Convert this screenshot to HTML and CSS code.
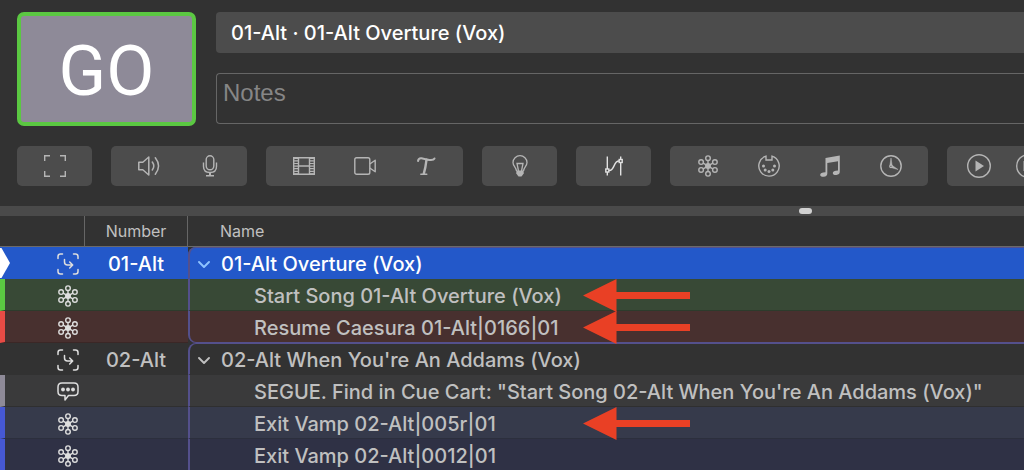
FILE: index.html
```html
<!DOCTYPE html>
<html lang="en">
<head>
<meta charset="UTF-8">
<meta name="viewport" content="width=device-width, initial-scale=1.0">
<title>Cue List</title>
<link rel="stylesheet" href="styles.css">
</head>
<body>

<svg class="symbols" aria-hidden="true">
  <symbol id="network" viewBox="0 0 22 22">
    <g fill="none" stroke="currentColor" stroke-width="1.4">
      <path d="M11 5.8v10.4M6.2 8.2l9.600 5.600M15.800 8.200l-9.600 5.600"/>
      <circle cx="11" cy="3.200" r="2.300"/>
      <circle cx="11" cy="18.800" r="2.300"/>
      <circle cx="4.100" cy="7.100" r="2.300"/>
      <circle cx="17.900" cy="7.100" r="2.300"/>
      <circle cx="4.100" cy="14.900" r="2.300"/>
      <circle cx="17.900" cy="14.900" r="2.300"/>
    </g>
    <circle cx="11" cy="11" r="3" fill="currentColor"/>
  </symbol>
  <symbol id="group" viewBox="0 0 22 22">
    <g fill="none" stroke="currentColor" stroke-width="1.5" stroke-linecap="round" stroke-linejoin="round">
      <path d="M1 5.5V3.5Q1 1 3.5 1h2M16.500 1h2Q21 1 21 3.500v2M21 16.500v2Q21 21 18.500 21h-2M5.500 21h-2Q1 21 1 18.500v-2"/>
      <path d="M7.500 6.500v2.500q0 3 3 3h5M12.700 9l3 3-3 3"/>
    </g>
  </symbol>
  <symbol id="memo" viewBox="0 0 22 22">
    <path d="M5 2h12q4 0 4 4v4.500q0 4-4 4h-5.500L8 19v-4.500H5q-4 0-4-4V6q0-4 4-4z" fill="none" stroke="currentColor" stroke-width="1.500" stroke-linejoin="round"/>
    <g fill="currentColor">
      <circle cx="6" cy="8.500" r="1.900"/>
      <circle cx="11" cy="8.500" r="1.900"/>
      <circle cx="16" cy="8.500" r="1.900"/>
    </g>
  </symbol>
  <symbol id="chevron" viewBox="0 0 12 12">
    <path d="M1 3l5 5 5-5" fill="none" stroke="currentColor" stroke-width="1.900" stroke-linecap="round" stroke-linejoin="round"/>
  </symbol>
  <symbol id="arrow" viewBox="0 0 107 33">
    <path d="M0 16.500L33.500 0v13H107v7H33.500v13z" fill="currentColor"/>
  </symbol>
</svg>

<header class="top">
  <button class="go" type="button">GO</button>
  <div class="fields">
    <input class="cue-title" type="text" aria-label="Cue" value="01-Alt · 01-Alt Overture (Vox)">
    <textarea class="notes" aria-label="Notes" placeholder="Notes"></textarea>
  </div>
</header>

<div class="toolbar">
  <div class="tools">
    <button type="button" aria-label="Group">
      <svg viewBox="0 0 22 22"><path d="M.7 6V.7H6M16 .7h5.300V6M21.300 16v5.300H16M6 21.300H.7V16" fill="none" stroke="currentColor" stroke-width="1.400"/></svg>
    </button>
  </div>
  <div class="tools">
    <button type="button" aria-label="Audio">
      <svg viewBox="0 0 22 22"><g fill="none" stroke="currentColor" stroke-width="1.500" stroke-linejoin="round"><path d="M.8 7.300h4L10.800 2v18l-6-5.300H.8z"/><path d="M14.300 7q3 4 0 8M17.300 2.800q6.500 8.200 0 16.400" stroke-linecap="round"/></g></svg>
    </button>
    <button type="button" aria-label="Mic">
      <svg viewBox="0 0 22 22"><g fill="none" stroke="currentColor" stroke-width="1.400"><rect x="7.200" y=".8" width="7.600" height="14" rx="3.800"/><path d="M4.500 7.500v4q0 6 6.500 6t6.500-6v-4"/></g><path d="M10 17.500h2v2.500h3v1.500H7V20h3z" fill="currentColor"/></svg>
    </button>
  </div>
  <div class="tools">
    <button type="button" aria-label="Video">
      <svg viewBox="0 0 22 22"><g fill="none" stroke="currentColor"><path d="M.7 2.700h20.600v16.600H.7zM5.500 2.700v16.600M16.500 2.700v16.600M5.500 11h11" stroke-width="1.400"/><path d="M3.100 2.700v16.600M18.900 2.700v16.600" stroke-width="4" stroke-dasharray="1.200 1.400"/></g></svg>
    </button>
    <button type="button" aria-label="Camera">
      <svg viewBox="0 0 22 22"><g fill="none" stroke="currentColor" stroke-width="1.400" stroke-linejoin="round"><rect x=".8" y="2.800" width="15" height="16.400" rx="1.800"/><path d="M15.800 9l5.400-3.800v11.600L15.800 13"/></g></svg>
    </button>
    <button type="button" aria-label="Text">
      <svg viewBox="0 0 22 22"><g fill="none" stroke="currentColor" stroke-linecap="round"><path d="M3 6Q3.500 2.800 6.500 3.200Q13 5 16 5Q18.800 5 19.500 3.500" stroke-width="2"/><path d="M11.500 4.800Q10.500 13 8.800 18.700" stroke-width="2.400"/><path d="M5.800 19.300h6" stroke-width="1.400"/></g></svg>
    </button>
  </div>
  <div class="tools">
    <button type="button" aria-label="Light">
      <svg viewBox="0 0 22 22"><g fill="none" stroke="currentColor" stroke-width="1.300"><path d="M7.500 16C7 12 4 11 4 7.500a7 6.800 0 0 1 14 0C18 11 15 12 14.500 16"/><path d="M9.500 16L8 8.500h6L12.500 16"/></g><path d="M7.300 15.500h7.400v3L12.500 21.500h-3L7.300 18.500z" fill="currentColor"/></svg>
    </button>
  </div>
  <div class="tools">
    <button class="active" type="button" aria-label="Fade">
      <svg viewBox="0 0 22 22"><g fill="none" stroke="currentColor" stroke-width="1.400"><path d="M4.300 1.500v12.500M4.300 17v3.500M17.700 1.500v2.700M17.700 7.500v13M6 15.500c6 .5 4-9.500 10-9.500"/><rect x="2.800" y="14" width="3" height="3"/><rect x="16.200" y="4.500" width="3" height="3"/></g></svg>
    </button>
  </div>
  <div class="tools">
    <button type="button" aria-label="Network">
      <svg><use href="#network"/></svg>
    </button>
    <button type="button" aria-label="MIDI">
      <svg viewBox="0 0 22 22"><path d="M8 1.200V5h6V1.200A10.200 10.200 0 1 1 8 1.200z" fill="none" stroke="currentColor" stroke-width="1.400"/><g fill="currentColor"><circle cx="5.500" cy="11" r="1.500"/><circle cx="16.500" cy="11" r="1.500"/><circle cx="7.200" cy="14.900" r="1.500"/><circle cx="14.800" cy="14.900" r="1.500"/><circle cx="11" cy="16.600" r="1.500"/></g></svg>
    </button>
    <button type="button" aria-label="MIDI File">
      <svg viewBox="0 0 22 22"><path d="M6.500 3L20.800.4v16.200q0 3.200-3.400 3.400-3.600.2-3.600-2 0-2.200 5.200-2.500V6.200L8.300 8v10.500q0 3-3.600 3.200Q1.200 21.800 1.200 19.700 1.200 17.500 6.500 17.200z" fill="currentColor"/></svg>
    </button>
    <button type="button" aria-label="Timecode">
      <svg viewBox="0 0 22 22"><g fill="none" stroke="currentColor"><circle cx="11" cy="11" r="10.200" stroke-width="1.400"/><circle cx="11" cy="11.300" r="1.300" stroke-width="1.200"/></g><path d="M11 3l1.100 7.200h-2.200zM12.300 10.500l5.700 4-6.300-1.700z" fill="currentColor" stroke="currentColor" stroke-width=".5"/></svg>
    </button>
  </div>
  <div class="tools transport">
    <button type="button" aria-label="Start">
      <svg viewBox="0 0 24 24"><circle cx="12" cy="12" r="11.300" fill="none" stroke="currentColor" stroke-width="1.400"/><path d="M8.500 6.500L17 12l-8.500 5.500z" fill="currentColor"/></svg>
    </button>
    <button type="button" aria-label="Pause">
      <svg viewBox="0 0 24 24"><circle cx="12" cy="12" r="11.300" fill="none" stroke="currentColor" stroke-width="1.400"/><path d="M7.500 7h3v10h-3zM13.500 7h3v10h-3z" fill="currentColor"/></svg>
    </button>
  </div>
</div>

<div class="splitter"><div class="handle"></div></div>

<table class="cues">
  <colgroup>
    <col class="col-status">
    <col class="col-number">
    <col>
  </colgroup>
  <thead>
    <tr>
      <th></th>
      <th class="number">Number</th>
      <th class="name">Name</th>
    </tr>
  </thead>
  <tbody>
    <tr class="group selected">
      <td class="status"><svg class="playhead" viewBox="0 0 10 32"><path d="M0 1h1.500L10 16 1.500 31H0z" fill="currentColor"/></svg><svg class="icon"><use href="#group"/></svg></td>
      <td class="number">01-Alt</td>
      <td class="name"><svg class="chevron"><use href="#chevron"/></svg>01-Alt Overture (Vox)</td>
    </tr>
    <tr class="green">
      <td class="status"><svg class="icon"><use href="#network"/></svg></td>
      <td class="number"></td>
      <td class="name">Start Song 01-Alt Overture (Vox)<svg class="arrow"><use href="#arrow"/></svg></td>
    </tr>
    <tr class="red">
      <td class="status"><svg class="icon"><use href="#network"/></svg></td>
      <td class="number"></td>
      <td class="name">Resume Caesura 01-Alt|0166|01<svg class="arrow"><use href="#arrow"/></svg></td>
    </tr>
  </tbody>
  <tbody class="open">
    <tr class="group">
      <td class="status"><svg class="icon"><use href="#group"/></svg></td>
      <td class="number">02-Alt</td>
      <td class="name"><svg class="chevron"><use href="#chevron"/></svg>02-Alt When You're An Addams (Vox)</td>
    </tr>
    <tr class="gray">
      <td class="status"><svg class="icon"><use href="#memo"/></svg></td>
      <td class="number"></td>
      <td class="name">SEGUE. Find in Cue Cart: "Start Song 02-Alt When You're An Addams (Vox)"</td>
    </tr>
    <tr class="blue">
      <td class="status"><svg class="icon"><use href="#network"/></svg></td>
      <td class="number"></td>
      <td class="name">Exit Vamp 02-Alt|005r|01<svg class="arrow"><use href="#arrow"/></svg></td>
    </tr>
    <tr class="blue dim">
      <td class="status"><svg class="icon"><use href="#network"/></svg></td>
      <td class="number"></td>
      <td class="name">Exit Vamp 02-Alt|0012|01</td>
    </tr>
  </tbody>
</table>

</body>
</html>
```
FILE: styles.css
```css
* {
  box-sizing: border-box;
}
body {
  margin: 0;
  background-color: #323232;
  color: #c0c0c0;
  font-family: Inter, sans-serif;
  font-size: 20px;
  font-weight: 500;
  overflow: hidden;
}
button, input, textarea {
  font-family: inherit;
  margin: 0;
}
.symbols {
  display: none;
}

/* go button, cue title and notes */
.top {
  display: flex;
  gap: 20px;
  padding: 12px 0 0 17px;
}
.go {
  flex: none;
  width: 179px;
  height: 114px;
  padding: 4px 0 0;
  border: 4px solid #5bc842;
  border-radius: 7px;
  background-color: #8e8a98;
  color: #fff;
  font-family: Roboto, sans-serif;
  font-size: 70px;
  font-weight: 400;
}
.fields {
  flex: 1;
  display: flex;
  flex-direction: column;
  gap: 20px;
}
.cue-title {
  width: 100%;
  height: 41px;
  padding: 0 15px;
  border: 0;
  border-radius: 4px 0 0 4px;
  background-color: #4c4c4c;
  color: #fff;
  font-size: 20px;
  font-weight: 500;
}
.notes {
  display: block;
  width: 100%;
  height: 51px;
  padding: 5px 6px;
  border: 1px solid #666;
  border-right: 0;
  border-radius: 4px 0 0 4px;
  background: none;
  color: #fff;
  font-family: "Liberation Sans", Arial, sans-serif;
  font-size: 24px;
  line-height: 28px;
  resize: none;
}
.notes::placeholder {
  color: #868686;
}

/* cue type buttons */
.toolbar {
  display: flex;
  gap: 19px;
  padding: 20px 0 20px 17px;
  overflow: hidden;
}
.tools {
  flex: none;
  display: flex;
  padding: 0 7px;
  border-radius: 5px;
  background-color: #4c4c4c;
}
.tools button {
  display: flex;
  align-items: center;
  justify-content: center;
  width: 61px;
  height: 40px;
  padding: 0;
  border: 0;
  background: none;
  color: #b5b5b5;
}
.tools button.active {
  color: #e2e2e2;
}
.tools svg {
  width: 22px;
  height: 22px;
}
.transport button {
  width: 49px;
}
.transport svg {
  width: 24px;
  height: 24px;
}

.splitter {
  display: flex;
  align-items: center;
  height: 10px;
  background-color: #4a4a4a;
}
.handle {
  width: 13px;
  height: 6px;
  margin-left: 78%;
  border-radius: 3px;
  background-color: #d0d0d0;
}

/* cue list */
.cues {
  width: 100%;
  table-layout: fixed;
  border-collapse: separate;
  border-spacing: 0;
}
.col-status {
  width: 84px;
}
.col-number {
  width: 104px;
}
.cues th {
  height: 31px;
  padding: 0;
  border-bottom: 1px solid #6a6a6a;
  font-size: 16px;
  font-weight: 400;
}
.cues th.number {
  border-left: 1px solid #666;
  border-right: 1px solid #666;
}
.cues th.name {
  padding-left: 32px;
  text-align: left;
}
.cues td {
  height: 32px;
  padding: 2px 0 0;
  border-bottom: 1px solid rgba(0, 0, 0, 0.18);
  line-height: 24px;
  white-space: nowrap;
}
.cues td.status {
  position: relative;
  padding: 0 5px 0 0;
  border-left: 5px solid transparent;
  text-align: right;
  color: #dedede;
}
.cues td.number {
  text-align: center;
}
.cues td.name {
  position: relative;
  padding-left: 64px;
  border-left: 2px solid #54508c;
}
.cues .group td {
  border-bottom-color: transparent;
}
.cues .group td.name {
  padding-left: 8px;
  border-top: 1px solid #54508c;
  border-top-left-radius: 8px;
}
.cues tbody:not(.open) tr:last-child td.name {
  border-bottom: 1px solid #54508c;
  border-bottom-left-radius: 8px;
}
.icon {
  display: inline-block;
  width: 22px;
  height: 22px;
  vertical-align: middle;
}
.chevron {
  width: 12px;
  height: 12px;
  margin-right: 11px;
}
.playhead {
  position: absolute;
  top: 0;
  left: -5px;
  width: 10px;
  height: 32px;
  color: #fff;
}
.arrow {
  position: absolute;
  top: 0;
  left: 393px;
  z-index: 1;
  width: 107px;
  height: 33px;
  color: #e94025;
}

.selected {
  background-color: #2358c9;
  color: #fff;
}
.selected .chevron {
  color: #8fc4ff;
}
.green {
  background-color: #384936;
}
.cues .green .status {
  border-left-color: #5bc842;
}
.red {
  background-color: #48302f;
}
.cues .red .status {
  border-left-color: #e84b45;
}
.gray {
  background-color: #3a3a3b;
}
.cues .gray .status {
  border-left-color: #8e8a98;
}
.blue {
  background-color: #363a4b;
}
.cues .blue .status {
  border-left-color: #4658d4;
}
.dim {
  background-color: #2f3145;
}
```
